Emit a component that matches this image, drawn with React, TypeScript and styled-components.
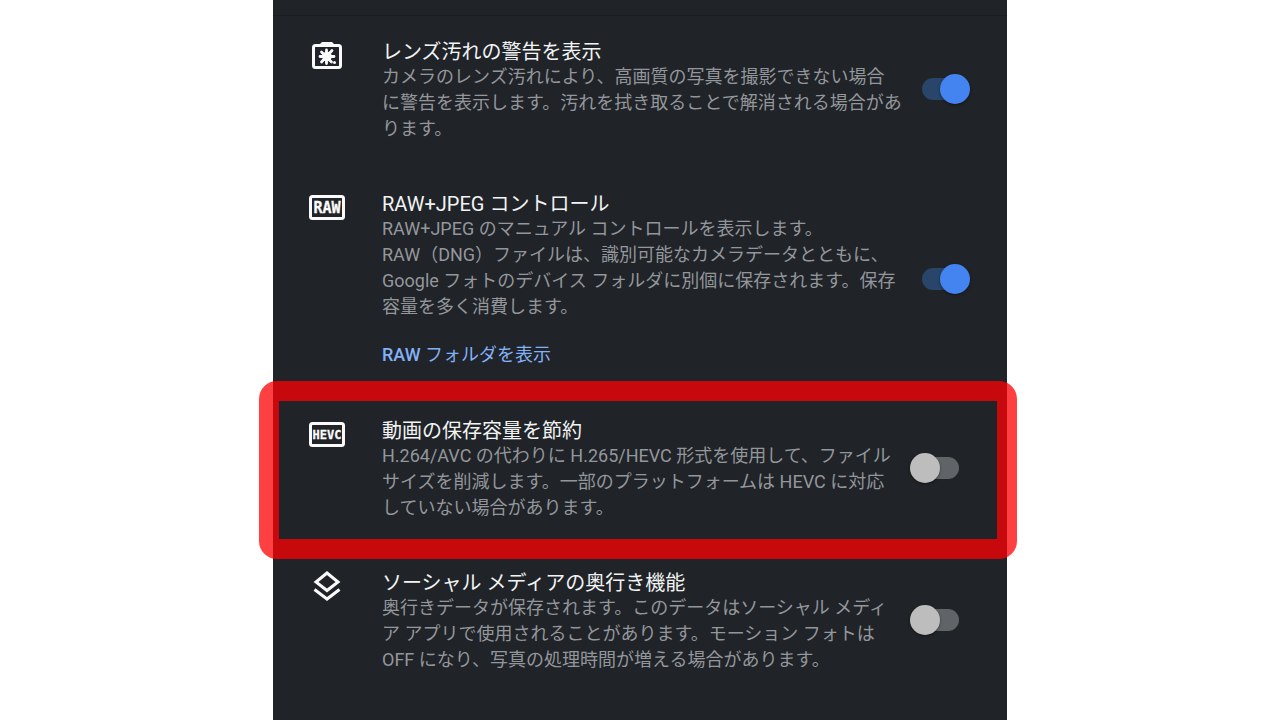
import React, { useId, useState } from "react";
import styled, { createGlobalStyle } from "styled-components";

const GlobalStyle = createGlobalStyle`
  *, *::before, *::after { box-sizing: border-box; }
  body {
    margin: 0;
    background: #ffffff;
    font-family: Roboto, "Noto Sans CJK JP", sans-serif;
  }
`;

const Screen = styled.main`
  width: 100%;
  max-width: 734px;
  min-height: 100vh;
  margin: 0 auto;
  background: #202327;
`;

const TopEdge = styled.div`
  height: 16px;
  border-bottom: 1px solid #1b1e21;
`;

const List = styled.ul`
  margin: 0;
  padding: 0;
  list-style: none;
`;

const Row = styled.li`
  position: relative;
  display: flex;
  padding: 24px 37px 26px 36px;
`;

const IconSlot = styled.div`
  flex: 0 0 73px;
`;

const Body = styled.div`
  flex: 1 1 0;
  min-width: 0;
`;

const Title = styled.label`
  display: block;
  color: #f1f3f4;
  font-size: 20px;
  line-height: 24px;
  white-space: nowrap;
`;

const Description = styled.p`
  margin: 0;
  color: #93979c;
  font-size: 18px;
  line-height: 26px;
  white-space: pre;
`;

const FolderLink = styled.a`
  display: block;
  width: fit-content;
  margin-top: 20px;
  color: #83b1f8;
  font-size: 18px;
  line-height: 29px;
  text-decoration: none;
`;

const LinkFormat = styled.strong`
  font-weight: 500;
`;

const SwitchSlot = styled.div`
  display: flex;
  flex: 0 0 60px;
  align-items: center;
  padding-bottom: 4px;
`;

const Switch = styled.input`
  appearance: none;
  position: relative;
  width: 60px;
  height: 30px;
  margin: 0;
  cursor: pointer;

  &::before {
    content: "";
    position: absolute;
    top: 4px;
    left: 5px;
    width: 44px;
    height: 22px;
    border-radius: 11px;
    background: #606467;
  }

  &::after {
    content: "";
    position: absolute;
    top: 0;
    left: 0;
    width: 30px;
    height: 30px;
    border-radius: 50%;
    background: #bdbdbd;
    box-shadow: 0 1px 3px rgba(0, 0, 0, 0.4);
  }

  &:checked::before {
    left: 12px;
    background: #294569;
  }

  &:checked::after {
    left: 30px;
    background: #4384f1;
  }
`;

const Highlight = styled.div`
  position: absolute;
  inset: -14px -10px -12px -14px;
  border: 20px solid rgba(255, 0, 4, 0.75);
  border-radius: 18px;
  pointer-events: none;
`;

const Glyph = styled.svg`
  display: block;
  width: 36px;
  height: 32px;
  fill: none;
  stroke: #fafafa;
`;

const GlyphText = styled.text`
  fill: #fafafa;
  stroke: #fafafa;
  stroke-width: 0.3px;
  font-family: "DejaVu Sans Mono", monospace;
  font-weight: 700;
  text-anchor: middle;
`;

const DirtyLensIcon = () => (
  <Glyph viewBox="0 0 36 32" aria-hidden="true">
    <path d="M10 5 L13 2 H23 L26 5 Z" fill="#fafafa" stroke="none" />
    <rect x="4.5" y="5.5" width="27" height="22" rx="2" strokeWidth="3" />
    <path
      d="M17.500 10 V23.500 M11 16.500 H25 M12.500 12 L22.500 22 M23 10.500 L12.500 22"
      strokeWidth="2.800"
      strokeLinecap="round"
    />
    <circle cx="18" cy="16.500" r="4.800" fill="#fafafa" stroke="none" />
    <circle cx="25.500" cy="22.500" r="1.500" fill="#fafafa" stroke="none" />
  </Glyph>
);

const FormatIcon = ({ text, size }: { text: string; size: number }) => (
  <Glyph viewBox="0 0 36 32" aria-hidden="true">
    <rect x="1.5" y="4.500" width="33" height="22" rx="2" strokeWidth="3" />
    <GlyphText x="18" y={15.5 + size * 0.365} fontSize={size}>
      {text}
    </GlyphText>
  </Glyph>
);

const LayersIcon = () => (
  <Glyph viewBox="0 0 36 32" aria-hidden="true">
    <path d="M18 2 L29 11 L18 19.500 L7 11 Z" strokeWidth="3" />
    <path d="M5.500 18.500 L18 28 L30.500 18.500" strokeWidth="3" />
  </Glyph>
);

type Setting = {
  icon: React.ReactNode;
  title: string;
  lines: string[];
  link?: React.ReactNode;
  on: boolean;
  highlighted?: boolean;
};

const settings: Setting[] = [
  {
    icon: <DirtyLensIcon />,
    title: "レンズ汚れの警告を表示",
    lines: [
      "カメラのレンズ汚れにより、高画質の写真を撮影できない場合",
      "に警告を表示します。汚れを拭き取ることで解消される場合があ",
      "ります。",
    ],
    on: true,
  },
  {
    icon: <FormatIcon text="RAW" size={15} />,
    title: "RAW+JPEG コントロール",
    lines: [
      "RAW+JPEG のマニュアル コントロールを表示します。",
      "RAW（DNG）ファイルは、識別可能なカメラデータとともに、",
      "Google フォトのデバイス フォルダに別個に保存されます。保存",
      "容量を多く消費します。",
    ],
    link: (
      <>
        <LinkFormat>RAW</LinkFormat> フォルダを表示
      </>
    ),
    on: true,
  },
  {
    icon: <FormatIcon text="HEVC" size={12} />,
    title: "動画の保存容量を節約",
    lines: [
      "H.264/AVC の代わりに H.265/HEVC 形式を使用して、ファイル",
      "サイズを削減します。一部のプラットフォームは HEVC に対応",
      "していない場合があります。",
    ],
    on: false,
    highlighted: true,
  },
  {
    icon: <LayersIcon />,
    title: "ソーシャル メディアの奥行き機能",
    lines: [
      "奥行きデータが保存されます。このデータはソーシャル メディ",
      "ア アプリで使用されることがあります。モーション フォトは",
      "OFF になり、写真の処理時間が増える場合があります。",
    ],
    on: false,
  },
];

const SettingRow = ({ icon, title, lines, link, on, highlighted }: Setting) => {
  const id = useId();
  const [checked, setChecked] = useState(on);
  return (
    <Row>
      <IconSlot>{icon}</IconSlot>
      <Body>
        <Title htmlFor={id}>{title}</Title>
        <Description>{lines.join("\n")}</Description>
        {link && <FolderLink href="#raw">{link}</FolderLink>}
      </Body>
      <SwitchSlot>
        <Switch
          id={id}
          type="checkbox"
          role="switch"
          checked={checked}
          onChange={(e) => setChecked(e.target.checked)}
        />
      </SwitchSlot>
      {highlighted && <Highlight />}
    </Row>
  );
};

export default function App() {
  return (
    <>
      <GlobalStyle />
      <Screen lang="ja">
        <TopEdge />
        <List>
          {settings.map((s) => (
            <SettingRow key={s.title} {...s} />
          ))}
        </List>
      </Screen>
    </>
  );
}
